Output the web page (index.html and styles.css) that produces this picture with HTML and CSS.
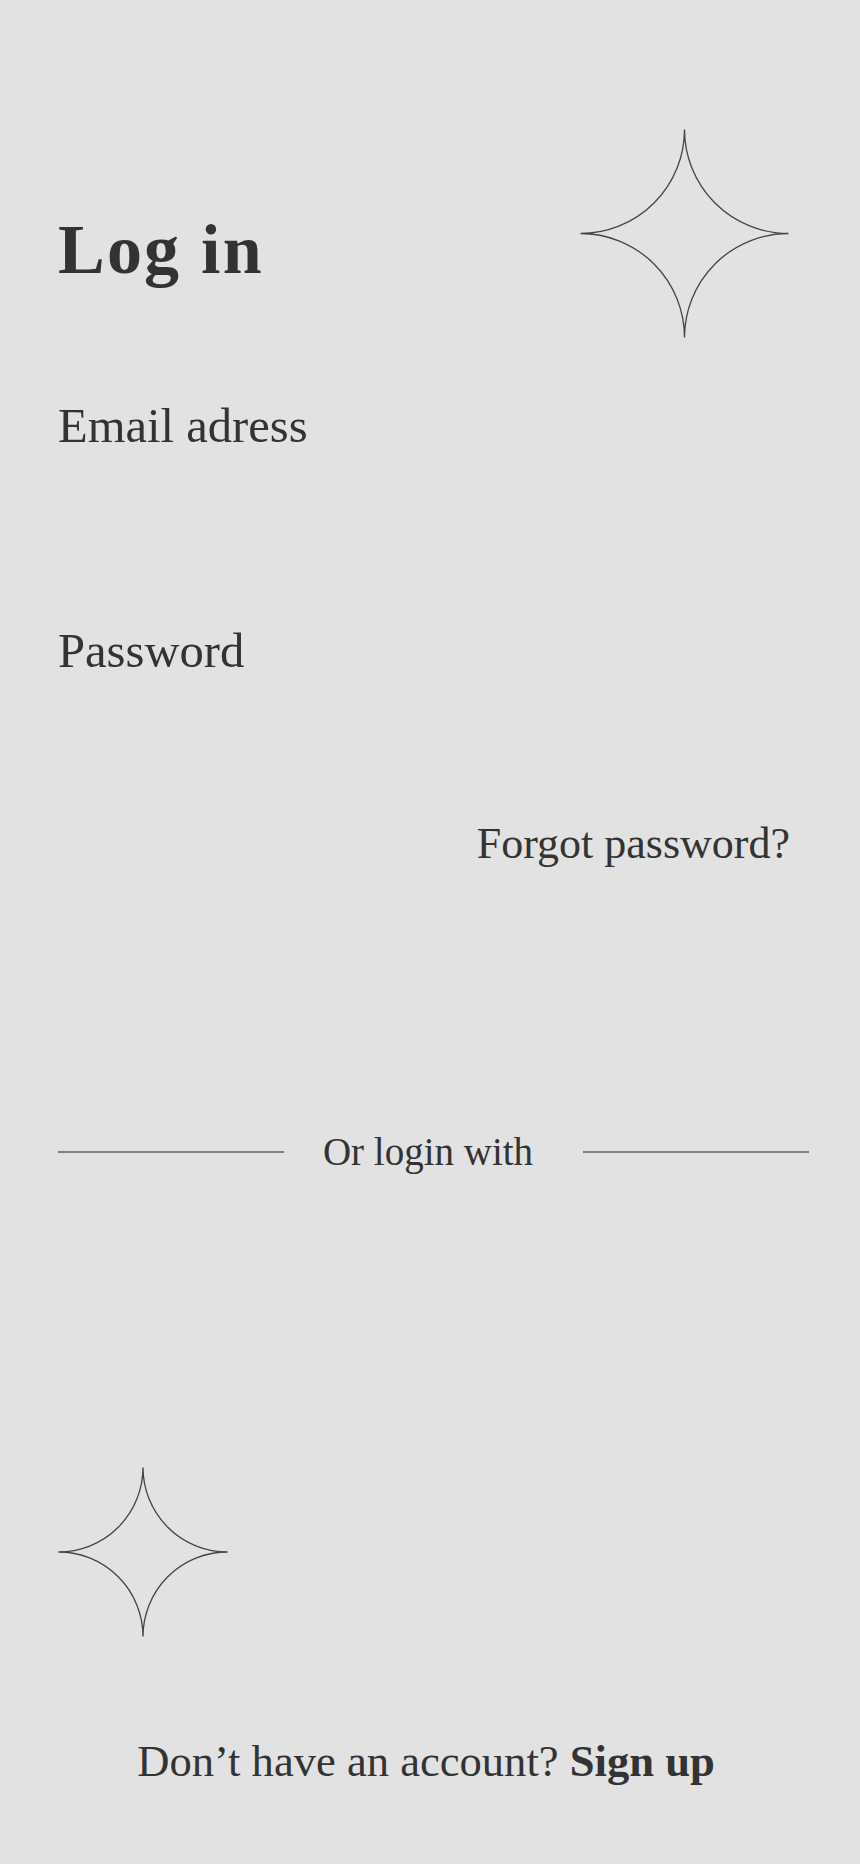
FILE: index.html
```html
<!DOCTYPE html>
<html lang="en">
<head>
<meta charset="utf-8">
<title>Log in</title>
<link rel="stylesheet" href="styles.css">
</head>
<body>
<main class="page">
  <header class="top">
    <h1 class="title">Log in</h1>
    <svg class="star star-lg" width="209" height="209" viewBox="0 0 209 209" aria-hidden="true">
      <path d="M104.5 0.5 A104 104 0 0 0 208.5 104.5 A104 104 0 0 0 104.5 208.5 A104 104 0 0 0 0.5 104.5 A104 104 0 0 0 104.5 0.5 Z" />
    </svg>
  </header>

  <form class="form">
    <label class="label" for="email">Email adress</label>
    <input class="field field-email" id="email" type="email">
    <label class="label" for="password">Password</label>
    <input class="field field-pass" id="password" type="password">
    <a class="forgot" href="#">Forgot password?</a>
  </form>

  <div class="divider">
    <span class="rule"></span>
    <span class="divider-text">Or login with</span>
    <span class="rule"></span>
  </div>

  <svg class="star star-sm" width="170" height="170" viewBox="0 0 170 170" aria-hidden="true">
    <path d="M85 0.5 A84.5 84.5 0 0 0 169.5 85 A84.5 84.5 0 0 0 85 169.5 A84.5 84.5 0 0 0 0.5 85 A84.5 84.5 0 0 0 85 0.5 Z" />
  </svg>

  <p class="signup">Don’t have an account? <a class="signup-link" href="#">Sign up</a></p>
</main>
</body>
</html>
```

FILE: styles.css
```css
html, body {
  margin: 0;
  padding: 0;
  background: #e2e2e2;
}

body {
  min-height: 100vh;
  color: #333333;
  font-family: "Liberation Serif", "Times New Roman", serif;
}

.page {
  display: flex;
  flex-direction: column;
  padding: 129px 51px 0 58px;
}

.top {
  display: flex;
  justify-content: space-between;
  align-items: flex-start;
}

.title {
  margin: 86px 0 0 0;
  font-size: 70px;
  line-height: 1;
  font-weight: 700;
  letter-spacing: 2.2px;
}

.star {
  display: block;
  flex: none;
}

.star path {
  fill: none;
  stroke: #444444;
  stroke-width: 1.3;
}

.star-lg {
  margin-right: 20px;
}

.form {
  display: flex;
  flex-direction: column;
  margin: 64px 0 0 0;
}

.label {
  font-size: 48.6px;
  line-height: 1;
}

.field {
  display: block;
  border: none;
  outline: none;
  background: transparent;
  padding: 0;
  margin: 24px 0;
  font: inherit;
}

.field-email {
  height: 128px;
}

.field-pass {
  height: 99px;
}

.forgot {
  align-self: flex-end;
  margin-right: 19px;
  font-size: 44px;
  line-height: 1;
  color: #333333;
  text-decoration: none;
}

.divider {
  display: flex;
  align-items: center;
  gap: 39px;
  margin-top: 266px;
}

.rule {
  flex: 1;
  height: 2px;
  background: #808080;
}

.divider-text {
  font-size: 39px;
  line-height: 1;
  white-space: nowrap;
  margin-right: 11px;
}

.star-sm {
  margin-top: 296px;
}

.signup {
  margin: 102px 0 0 0;
  text-align: center;
  font-size: 44.6px;
  line-height: 1;
  padding-right: 15px;
}

.signup-link {
  color: #333333;
  font-weight: 700;
  text-decoration: none;
}
```
